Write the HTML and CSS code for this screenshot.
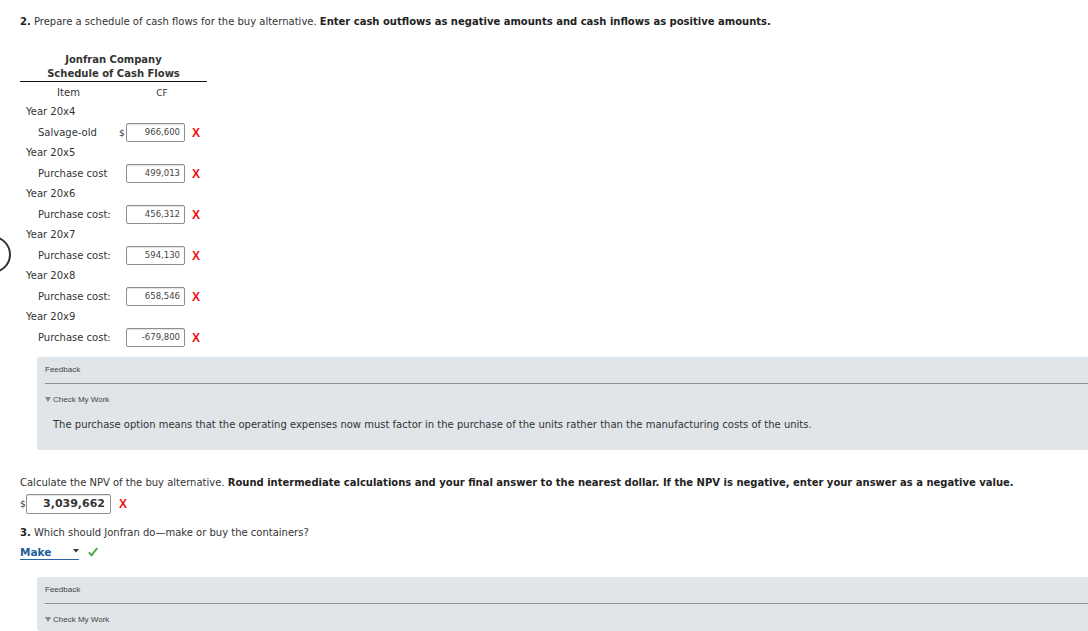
FILE: index.html
```html
<!DOCTYPE html>
<html>
<head>
<meta charset="utf-8">
<link rel="stylesheet" href="styles.css">
</head>
<body>
<div class="ring"></div>
<div class="page">
  <p class="q q1"><b>2.</b> Prepare a schedule of cash flows for the buy alternative. <b>Enter cash outflows as negative amounts and cash inflows as positive amounts.</b></p>

  <table class="sched">
    <tr><th colspan="2" class="title">Jonfran Company<br>Schedule of Cash Flows</th></tr>
    <tr class="head"><td class="c1">Item</td><td class="c2">CF</td></tr>
    <tr class="yr"><td colspan="2">Year 20x4</td></tr>
    <tr class="it"><td class="lbl">Salvage-old</td><td class="val"><span class="cur">$</span><span class="box">966,600</span><span class="x">X</span></td></tr>
    <tr class="yr"><td colspan="2">Year 20x5</td></tr>
    <tr class="it"><td class="lbl">Purchase cost</td><td class="val"><span class="cur"></span><span class="box">499,013</span><span class="x">X</span></td></tr>
    <tr class="yr"><td colspan="2">Year 20x6</td></tr>
    <tr class="it"><td class="lbl">Purchase cost:</td><td class="val"><span class="cur"></span><span class="box">456,312</span><span class="x">X</span></td></tr>
    <tr class="yr"><td colspan="2">Year 20x7</td></tr>
    <tr class="it"><td class="lbl">Purchase cost:</td><td class="val"><span class="cur"></span><span class="box">594,130</span><span class="x">X</span></td></tr>
    <tr class="yr"><td colspan="2">Year 20x8</td></tr>
    <tr class="it"><td class="lbl">Purchase cost:</td><td class="val"><span class="cur"></span><span class="box">658,546</span><span class="x">X</span></td></tr>
    <tr class="yr"><td colspan="2">Year 20x9</td></tr>
    <tr class="it"><td class="lbl">Purchase cost:</td><td class="val"><span class="cur"></span><span class="box">-679,800</span><span class="x">X</span></td></tr>
  </table>

  <div class="feedback">
    <div class="fb-title">Feedback</div>
    <div class="fb-check"><span class="tri"></span>Check My Work</div>
    <div class="fb-body">The purchase option means that the operating expenses now must factor in the purchase of the units rather than the manufacturing costs of the units.</div>
  </div>

  <p class="q q2">Calculate the NPV of the buy alternative. <b>Round intermediate calculations and your final answer to the nearest dollar. If the NPV is negative, enter your answer as a negative value.</b></p>
  <div class="npv"><span class="cur">$</span><span class="box big">3,039,662</span><span class="x">X</span></div>

  <p class="q q3"><b>3.</b> Which should Jonfran do—make or buy the containers?</p>
  <div class="choice">
    <span class="select">Make<svg class="arrow" width="6" height="4" viewBox="0 0 6 4"><path d="M0 0H6L3 3.5Z" fill="#333"/></svg></span>
    <svg class="check" width="10" height="10" viewBox="0 0 10 10"><path d="M0.8 5.4L3.6 8.4L9.2 1.2" fill="none" stroke="#4aa84a" stroke-width="1.9"/></svg>
  </div>

  <div class="feedback fb2">
    <div class="fb-title">Feedback</div>
    <div class="fb-check"><span class="tri"></span>Check My Work</div>
  </div>
</div>
</body>
</html>
```
FILE: styles.css
```css
html, body {
  margin: 0;
  padding: 0;
  background: #fff;
  overflow: hidden;
}
body {
  font-family: "DejaVu Sans", Verdana, sans-serif;
  font-size: 10px;
  line-height: 12px;
  color: #333;
}
.ring {
  position: absolute;
  left: -26px;
  top: 236px;
  width: 33px;
  height: 33px;
  border: 2px solid #333;
  border-radius: 50%;
}
.page {
  padding-left: 20px;
}
.q {
  margin: 0;
  white-space: nowrap;
}
.q b { color: #222; }
.q1 { margin-top: 16px; }

.sched {
  margin-top: 25px;
  border-collapse: collapse;
  width: 187px;
}
.sched td, .sched th {
  padding: 0;
}
.title {
  font-weight: bold;
  line-height: 14px;
  text-align: center;
  color: #333;
  border-bottom: 1px solid #111;
}
.head td {
  height: 18px;
  padding-top: 2px;
  text-align: center;
  vertical-align: middle;
}
.head .c2 { font-size: 9px; }
.c1 { width: 97px; }
.c2 { width: 90px; }
.yr td {
  height: 20px;
  padding-left: 6px;
  vertical-align: middle;
}
.it td { height: 21px; vertical-align: middle; }
.lbl { padding-left: 18px !important; white-space: nowrap; }
.val { white-space: nowrap; }
.val, .npv {
  display: flex;
  align-items: center;
  height: 21px;
}
.cur {
  display: inline-block;
  width: 7px;
  font-size: 9px;
  margin-left: 2px;
}
.box {
  display: inline-block;
  box-sizing: border-box;
  width: 59px;
  height: 19px;
  border: 1px solid #8f8f8f;
  border-radius: 2px;
  box-shadow: inset 0 1px 1px rgba(0,0,0,0.12);
  background: #fff;
  text-align: right;
  padding-right: 4px;
  font-size: 8.5px;
  line-height: 17px;
  color: #444;
}
.x {
  font-family: "Liberation Sans", Arial, sans-serif;
  font-weight: bold;
  font-size: 12px;
  color: #ee1111;
  margin-left: 7px;
}

.feedback {
  margin-left: 17px;
  margin-top: 9px;
  background: #dfe5e9;
  border-radius: 3px 0 0 3px;
  padding: 8px 0 19px 8px;
  height: 66px;
}
.fb-title {
  font-family: "Liberation Sans", Arial, sans-serif;
  font-size: 8px;
  line-height: 10px;
  color: #444;
  padding-bottom: 8px;
  border-bottom: 1px solid #8a9094;
}
.fb-check {
  font-family: "Liberation Sans", Arial, sans-serif;
  font-size: 8px;
  line-height: 10px;
  color: #444;
  margin-top: 11px;
  display: flex;
  align-items: center;
}
.tri {
  display: inline-block;
  width: 0;
  height: 0;
  border-left: 3px solid transparent;
  border-right: 3px solid transparent;
  border-top: 5px solid #888;
  margin-right: 2px;
  margin-top: -1px;
}
.fb-body {
  margin-top: 14px;
  padding-left: 8px;
  white-space: nowrap;
}

.q2 { margin-top: 27px; }
.npv {
  margin-top: 5px;
  height: 20px;
}
.npv .cur { margin-left: 0; width: 6px; }
.box.big {
  width: 85px;
  height: 20px;
  font-size: 11px;
  font-weight: bold;
  line-height: 18px;
  padding-right: 5px;
  color: #333;
}
.npv .x { margin-left: 8px; }

.q3 { margin-top: 13px; }
.choice {
  margin-top: 5px;
  display: flex;
  align-items: center;
  height: 16px;
}
.select {
  display: inline-flex;
  align-items: center;
  justify-content: space-between;
  box-sizing: border-box;
  width: 59px;
  height: 16px;
  font-weight: bold;
  font-size: 10.5px;
  color: #1f5c99;
  border-bottom: 1.5px solid #2a64a3;
  padding-right: 0;
}
.arrow { margin-top: -2px; }
.check { margin-left: 9px; }

.fb2 {
  margin-top: 17px;
  padding-bottom: 0;
  height: 46px;
}
```
